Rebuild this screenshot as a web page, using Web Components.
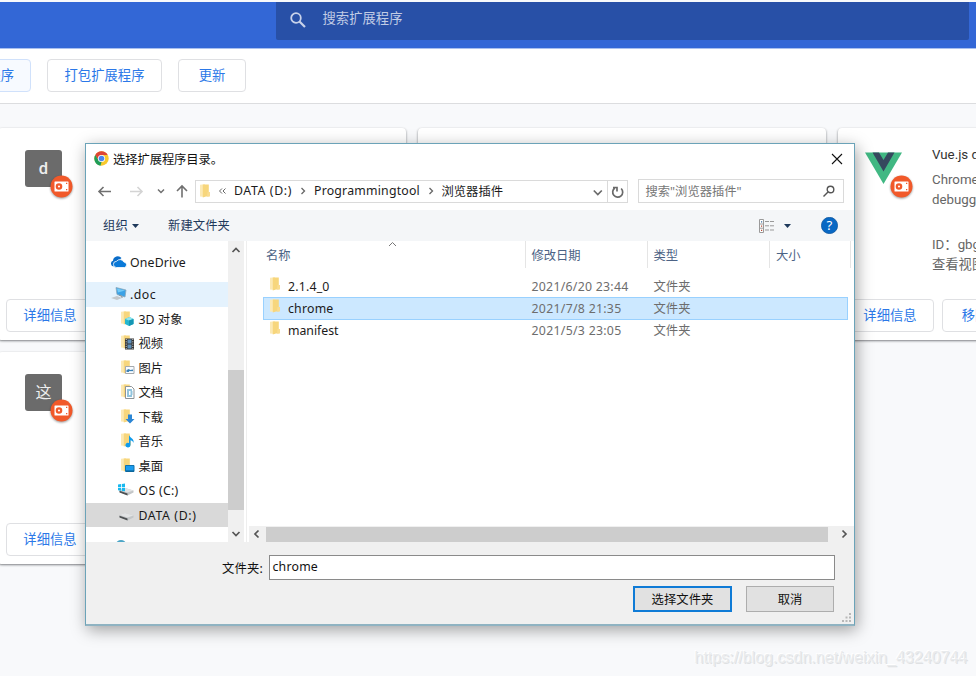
<!DOCTYPE html>
<html lang="zh-CN">
<head>
<meta charset="utf-8">
<title>扩展程序</title>
<style>
html,body{margin:0;padding:0}
body{width:976px;height:676px;overflow:hidden;position:relative;background:#f8f9fb;font-family:"Noto Sans","Noto Sans CJK SC",sans-serif;font-size:12.3px}
</style>
</head>
<body>
<ext-page></ext-page>
<folder-dialog></folder-dialog>
<script>
const make = (name, html, after) => customElements.define(name, class extends HTMLElement {
  connectedCallback() {
    if (this.shadowRoot) return;
    const root = this.attachShadow({mode: 'open'});
    root.innerHTML = typeof html === 'function' ? html(this) : html;
    if (after) after(this, root);
  }
});

make('ext-page', `
<style>
:host{display:block;width:976px;height:676px;overflow:hidden;font-family:Roboto,"Noto Sans CJK SC",sans-serif}
header{margin-top:2px;background:#3367d6;display:flex;border-bottom:1px solid #a9c0ef;box-sizing:border-box;height:47px}
.search{margin-left:275.500px;width:693px;height:38px;background:#2850a7;border-radius:0 0 2px 2px;display:flex;align-items:center;color:#c1cce5;font-size:13.3px;line-height:20px}
.search svg{margin:0 16px 2px 13px}
.search ui-label{padding-bottom:4px}
.tools{background:#fff;border-bottom:1px solid #dcdddf;display:flex;gap:16px;padding-top:10px;box-sizing:border-box;height:55px;margin-left:-60px}
.cards{display:grid;grid-template-columns:408px 408px 408px;grid-auto-rows:212px;gap:12px;margin:24px 0 0 -2px;width:1248px}
</style>
<header><div class="search"><svg width="18" height="18" viewBox="0 0 18 18" fill="none" stroke="#c8d2ea" stroke-width="1.8"><circle cx="7" cy="7" r="4.8"/><path d="M10.5 10.5L16 16" stroke-width="2.2"/></svg><ui-label w="80">搜索扩展程序</ui-label></div></header>
<div class="tools">
<page-button style="width:91px" tint><ui-label w="53.3">扩展程序</ui-label></page-button>
<page-button style="width:115px"><ui-label w="80">打包扩展程序</ui-label></page-button>
<page-button style="width:68px"><ui-label w="26.6">更新</ui-label></page-button>
</div>
<div class="cards">
<ext-card letter="d"></ext-card><ext-card></ext-card>
<ext-card vue><div slot="text"><div style="color:#333;height:24.5px"><ui-label>Vue.js devtools</ui-label></div><div style="height:20.500px">Chrome and</div><div style="height:44.5px">debugging</div><div style="height:20.5px">ID：gbgnko</div><div>查看视图</div></div></ext-card>
<ext-card letter="这"></ext-card>
</div>`);

make('page-button', `
<style>
:host{display:flex;box-sizing:border-box;height:33px;flex:none;align-items:center;justify-content:center;border:1px solid #dfe0e3;border-radius:4px;background:#fff;color:#2b78e8;font-size:13.3px;line-height:20px}
:host([tint]){background:#f7faff;border-color:#d0e1fb;justify-content:flex-end;padding-right:16px}
</style><slot></slot>`);

make('ext-card', el => `
<style>
:host{display:flex;flex-direction:column;background:#fff;border-radius:4px;box-shadow:0 1px 2px rgba(60,64,67,.5),0 1px 3px rgba(60,64,67,.2);overflow:hidden}
.top{height:171px;display:flex;box-sizing:border-box;padding:22px 0 0 27px;flex:none}
.pic{width:37px;height:37px;position:relative;flex:none}
.tile{width:37px;height:37px;border-radius:3px;background:#6b6b6b;color:#eee;display:flex;align-items:center;justify-content:center;font:500 16.5px/22px Roboto,"Noto Sans CJK SC",sans-serif}
.tile.cjk{font-weight:400;font-size:16px}
.badge{position:absolute;left:24.5px;top:25px;filter:drop-shadow(0 1px 1px rgba(0,0,0,.4))}
.text{margin:-5px 0 0 30px;font-size:13.3px;line-height:20px;color:#666;white-space:nowrap}
.acts{display:flex;gap:8px;padding-left:8px}
</style>
<div class="top"><div class="pic">
${el.hasAttribute('vue') ? '<svg width="37" height="37" viewBox="0 0 37 37"><path d="M0 2.500H37L18.500 34Z" fill="#41b883"/><path d="M7.500 2.500H14L18.500 10L23 2.500H29.500L18.500 21.500Z" fill="#35495e"/></svg>' : el.getAttribute('letter') ? `<div class="tile${el.getAttribute('letter') > 'z' ? ' cjk' : ''}">${el.getAttribute('letter')}</div>` : ''}
${el.hasAttribute('vue') || el.getAttribute('letter') ? '<svg class="badge" width="23" height="23" viewBox="0 0 23 23"><circle cx="11.500" cy="11.500" r="11" fill="#f1592a"/><rect x="4.500" y="6.500" width="14" height="10" rx=".5" fill="#fff"/><circle cx="9" cy="11.500" r="2.200" fill="#fff" stroke="#f1592a" stroke-width="2.200"/><path d="M16 7.700h1.300v1.300h-1.300zM16 14h1.300v1.300h-1.300z" fill="#f1592a"/></svg>' : ''}
</div><div class="text"><slot name="text"></slot></div></div>
<div class="acts"><page-button style="width:88px"><ui-label w="53.3">详细信息</ui-label></page-button><page-button style="width:66px"><ui-label w="26.6">移除</ui-label></page-button></div>`);

const FOLDER = '<path d="M0 .800L5 .200V13L0 12.500Z" fill="#fce9b4"/><path d="M2.800 .500H8.800V12.500H6L2.800 13.500Z" fill="#f7d67c"/><path d="M7.500 8H10V12.500H7Z" fill="#f9dc90"/>';
const DRIVE = '<path d="M1.500 8L7 6L15.500 8.500V10.500L9.500 13.500L1.500 10Z" fill="#c3c6c8"/><path d="M1.500 8L7 6L15.500 8.500L9.500 10.500Z" fill="#e2e3e4"/><path d="M1.500 8.800L9.500 11.500V13.500L1.500 10.500Z" fill="#4d5052"/>';
const ICONS = {
  folder: FOLDER,
  cloud: '<path d="M2.500 12.500a3 3 0 0 1-.5-5.800A4.800 4.800 0 0 1 10.500 4L6 8Z" fill="#0a6cc8"/><path d="M5.500 13.500a3 3 0 0 1 0-6.200A4.300 4.300 0 0 1 12.800 8A2.800 2.800 0 0 1 13.500 13.500Z" fill="#0a79d8" stroke="#fff" stroke-width=".8"/>',
  pc: '<path d="M5 1.500L15 4L14 11L6 8.500Z" fill="#3ba2e6" stroke="#8ba8bb" stroke-width=".8"/><path d="M6 2.500L14 4.500L7 6.500Z" fill="#72caf7"/><path d="M0 12L6 10L11 12L6 14Z" fill="#c3c8cc"/><path d="M8 9L11 10.500V12" stroke="#8a9298" fill="none"/>',
  cube: FOLDER + '<path d="M4 8L8.500 6L12.500 8V13L8 15L4 13Z" fill="#25b7cf"/><path d="M4 8L8.500 6L12.500 8L8 9.500Z" fill="#90e6ed"/><path d="M8 9.500L12.500 8V13L8 15Z" fill="#1596b4"/>',
  video: FOLDER + '<path d="M4 3.500H13V14.500H4Z" fill="#343434"/><path d="M6.500 4.500H10.500V8.500H6.500ZM6.500 9.500H10.500V13.500H6.500Z" fill="#5e8fba"/><path d="M5.200 4v10M11.800 4v10" stroke="#ddd" stroke-width="1" stroke-dasharray="1 1.300"/>',
  image: FOLDER + '<path d="M4.500 6.500H13V13.500H4.500Z" fill="#f8fbff" stroke="#a5a9ad"/><path d="M5.500 10L8 9L9 10L12 9.500V12H5.500Z" fill="#3b82b7"/><path d="M8 11.500h4" stroke="#dcecf6"/>',
  doc: FOLDER + '<path d="M4.500 2.500H10.500L13 5V14.500H4.500Z" fill="#fff" stroke="#8d9397"/><path d="M6 6h5M6 8h2M9.500 8h2M6 10h2M9.500 10h2M6 12h5" stroke="#2588ba"/>',
  down: FOLDER + '<path d="M7 5.500H11V10H13.500L9 14.500L4.500 10H7Z" fill="#2c86d4"/>',
  music: FOLDER + '<path d="M8 2C9 5 13.500 5.500 12.500 10C12 8 10.500 7.500 9.500 7.500V12A2.500 2.300 0 1 1 8 10Z" fill="#109bec"/>',
  desk: FOLDER + '<path d="M4.500 7.500H13V13.500H4.500Z" fill="#1a9cf0" stroke="#1172ad"/><path d="M5 13H13" stroke="#075887"/>',
  win: DRIVE + '<path d="M0 2.500L3 2V5H0ZM3.800 1.900L7 1.500V5H3.800ZM0 5.800H3V8.800L0 8.300ZM3.800 5.800H7V9.300L3.800 9Z" fill="#18b8ef"/>',
  drive: DRIVE
};
make('ui-icon', el => `<style>:host{display:block;width:16px;height:16px;flex:none}svg{display:block}</style><svg width="16" height="16" viewBox="0 0 16 16">${ICONS[el.getAttribute('name')]}</svg>`);

make('tree-item', el => `
<style>
:host{display:flex;align-items:center;height:24.500px;flex:none;color:#1a1a1a;box-sizing:border-box;padding-left:34.500px}
:host([root]){padding-left:25px}:host([disk]){padding-left:32px}
:host([hot]){background:#e4f2fd}:host([cur]){background:#d9d9d9}
ui-icon{margin-right:2px}:host([root]) ui-icon{margin-right:3px}:host([disk]) ui-icon{margin-right:4.500px}
::slotted(ui-label){padding-top:2px}
</style><ui-icon name="${el.getAttribute('icon')}"></ui-icon><slot></slot>`);

make('file-row', el => `
<style>
:host{display:grid;grid-template-columns:261.500px 122px 1fr;align-items:center;height:22px;box-sizing:border-box;width:585px;border:1px solid transparent;color:#6d6d6d;line-height:18px}
:host([sel]){background:#cce8ff;border-color:#99d1ff;height:23px;margin:-.5px 0}
.n{display:flex;align-items:center;color:#1a1a1a;padding-left:6px}ui-icon{margin:-2px 2px 0 0}
.d{padding-left:6px}.t{padding-left:6px}
.d,.t{padding-top:1px}
::slotted(ui-label){padding-top:1px}
</style><div class="n"><ui-icon name="folder"></ui-icon><slot></slot></div><div class="d"><ui-label w="${el.getAttribute('dw')}">${el.getAttribute('date')}</ui-label></div><div class="t"><ui-label w="37">文件夹</ui-label></div>`);

make('win-button', `<style>:host{display:flex;box-sizing:border-box;height:26px;align-items:center;justify-content:center;background:#e1e1e1;border:1px solid #adadad;color:#111}:host([primary]){border:2px solid #0f7bd6}::slotted(ui-label){padding-top:1px}</style><slot></slot>`);

make('folder-dialog', `
<style>
:host{position:absolute;left:85px;top:143px;width:770px;height:483px;box-sizing:border-box;border:1px solid #6ba3b8;border-bottom:2px solid #8fb3c2;background:#fff;box-shadow:2px 4px 15px rgba(0,0,0,.36);display:flex;flex-direction:column;line-height:18px;white-space:nowrap}
.title{height:30px;display:flex;align-items:center;padding:0 11.500px 0 7.500px;color:#111;flex:none}
.title ui-label{margin-left:4.500px;flex:1;padding-top:2px}
.title svg:first-child{margin-bottom:1px}
.nav{height:36px;display:flex;align-items:center;flex:none;box-sizing:border-box;padding:0 9px 2px 10px}
.addr{width:433px;height:23px;box-sizing:border-box;border:1px solid #dadada;display:flex;align-items:center;color:#1c1c1c}
.find{margin-left:9.500px;width:206.500px;height:24px;box-sizing:border-box;border:1px solid #dadada;display:flex;align-items:center;color:#777;padding:0 7px}
.find ui-label{flex:1;padding-top:2px}
.bar{height:31px;background:#f4f6f8;display:flex;align-items:center;color:#1e395b;flex:none;padding:0 16px 0 17px}
.body{height:301px;display:flex;flex:none}
.tree{width:142px;display:flex;flex-direction:column;padding-top:8px;box-sizing:border-box;overflow:hidden}
.vs{width:16px;background:#f0f0f0;display:flex;flex-direction:column;align-items:center}
.vs .thumb{width:16px;height:140px;background:#cdcdcd;margin-top:111px}
.gut{border-right:1px solid #eee;box-sizing:border-box;width:3px}
.main{flex:1;display:flex;flex-direction:column;padding-left:2px}
.head{display:grid;grid-template-columns:276.500px 122px 122.500px 81px;height:27px;color:#4c6385;align-items:stretch;position:relative}
.head div{border-right:1px solid #e5e5e5;display:flex;align-items:center;padding:2px 0 0 6px}
.head div:first-child{padding-left:17px}
.head svg{position:absolute;left:139px;top:0}
.files{flex:1;padding:7px 0 0 14px}
.hs{height:16px;background:#f0f0f0;display:flex;align-items:center}
.hs i{display:block;width:562px;height:15px;background:#cdcdcd}
.foot{flex:1;background:#f0f0f0;display:flex;flex-direction:column;position:relative;color:#111}
.row{display:flex;align-items:center;padding:13px 0 0 136px}
.row>ui-label{padding-top:2px}
.inp{width:566px;height:25px;box-sizing:border-box;border:1px solid #8a8a8a;background:#fff;margin-left:6px;padding:0 0 2px 2.500px;display:flex;align-items:center}
.btns{display:flex;justify-content:flex-end;gap:14px;padding:6px 20px 0 0}
.grip{position:absolute;right:2px;bottom:1px}
svg{display:block;flex:none}
</style>
<div class="title"><svg width="15" height="15" viewBox="0 0 15 15"><circle cx="7.500" cy="7.500" r="7.200" fill="#f7c92d"/><path d="M1.300 3.900A7.200 7.200 0 0 1 13.700 3.900H7.500L4.400 9.300Z" fill="#dd4536"/><path d="M1.300 3.900L4.400 9.300L7.500 11.100L6.500 14.700A7.200 7.200 0 0 1 1.300 3.900Z" fill="#1f9d58"/><circle cx="7.500" cy="7.500" r="3.600" fill="#fff"/><circle cx="7.500" cy="7.500" r="2.800" fill="#4a86ee"/></svg><ui-label w="110">选择扩展程序目录。</ui-label><svg width="12" height="12" viewBox="0 0 12 12"><path d="M1 1L11 11M11 1L1 11" stroke="#111" stroke-width="1.100"/></svg></div>
<div class="nav">
<svg width="99" height="18" viewBox="0 0 99 18" fill="none" stroke="#707070" stroke-width="1.600"><path d="M3 9.500H15M7.500 5L3 9.500L7.500 14"/><path d="M34 9.500H46M41.500 5L46 9.500L41.500 14" stroke="#d4d4d4"/><path d="M62 7.500L65 10.500L68 7.500" stroke-width="1.500"/><path d="M86 15.500V4M81 9L86 4L91 9"/></svg>
<div class="addr"><ui-icon name="folder" style="margin:1px 0 0 4px"></ui-icon>
<svg width="9" height="10" viewBox="0 0 9 10" fill="none" stroke="#666" style="margin:0 7px 0 2px"><path d="M4 2.500L1.500 5L4 7.500M7.500 2.500L5 5L7.500 7.500"/></svg>
<ui-label w="58">DATA (D:)</ui-label>
<svg width="22" height="10" viewBox="0 0 22 10" fill="none" stroke="#666" stroke-width="1.300"><path d="M9.500 2L12.500 5L9.500 8"/></svg>
<ui-label w="106">Programmingtool</ui-label>
<svg width="21.500" height="10" viewBox="0 0 21.500 10" fill="none" stroke="#666" stroke-width="1.300"><path d="M9.500 2L12.500 5L9.500 8"/></svg>
<ui-label w="61.500" style="padding-top:1px">浏览器插件</ui-label><span style="flex:1"></span>
<svg width="34" height="21" viewBox="0 0 34 21" fill="none" stroke="#6a6a6a" stroke-width="1.500"><path d="M.8 9.500L4.800 13.500L8.800 9.500" stroke-width="1.700"/><path d="M14.500 0V21" stroke="#dadada" stroke-width="1"/><path d="M21.800 7A5 5 0 1 0 28.200 7.500M20 6.500h4v4" stroke-width="1.700"/></svg></div>
<div class="find"><ui-label>搜索"浏览器插件"</ui-label><svg width="14" height="14" viewBox="0 0 14 14" fill="none" stroke="#555" stroke-width="1.400"><circle cx="8.500" cy="5.500" r="3.300"/><path d="M6 8L1.500 12.500"/></svg></div>
</div>
<div class="bar"><ui-label w="25">组织</ui-label><svg width="7" height="4" viewBox="0 0 7 4" style="margin:0 29px 0 4px"><path d="M0 0H7L3.500 4Z" fill="#1e395b"/></svg><ui-label w="62" style="padding-top:1px">新建文件夹</ui-label><span style="flex:1"></span>
<svg width="16" height="14" viewBox="0 0 16 14"><path d="M.5.5H4.500V13.500H.5ZM.5 5H4.500M.5 9.200H4.500" fill="#fff" stroke="#9a9a9a"/><path d="M2 2.300h1.200v1.200H2z" fill="#34679a"/><path d="M2 6.500h1.200v1.200H2zM2 10.700h1.200v1.200H2z" fill="#b34833"/><path d="M6 2.500h4M11 2.500h4M6 6.800h4M11 6.800h4M6 11h4M11 11h4" stroke="#999"/></svg>
<svg width="7" height="4" viewBox="0 0 7 4" style="margin:0 30px 0 9.500px"><path d="M0 0H7L3.500 4Z" fill="#1e395b"/></svg>
<svg width="17" height="17" viewBox="0 0 16 16"><circle cx="8" cy="8" r="7.700" fill="#0868c4" stroke="#0a4f96" stroke-width=".6"/><text x="8" y="12.500" text-anchor="middle" font-size="12.500" fill="#fff">?</text></svg></div>
<div class="body">
<div class="tree">
<tree-item root icon="cloud" style="height:25px"><ui-label w="56">OneDrive</ui-label></tree-item>
<tree-item root hot icon="pc" style="margin-top:8px"><ui-label w="26">.doc</ui-label></tree-item>
<tree-item icon="cube"><ui-label w="44">3D 对象</ui-label></tree-item>
<tree-item icon="video"><ui-label w="24.600">视频</ui-label></tree-item>
<tree-item icon="image"><ui-label w="24.600">图片</ui-label></tree-item>
<tree-item icon="doc"><ui-label w="24.600">文档</ui-label></tree-item>
<tree-item icon="down"><ui-label w="24.600">下载</ui-label></tree-item>
<tree-item icon="music"><ui-label w="24.600">音乐</ui-label></tree-item>
<tree-item icon="desk"><ui-label w="24.600">桌面</ui-label></tree-item>
<tree-item disk icon="win"><ui-label w="40">OS (C:)</ui-label></tree-item>
<tree-item disk cur icon="drive"><ui-label w="58">DATA (D:)</ui-label></tree-item>
<svg width="12" height="8" viewBox="0 0 12 8" style="margin:12px 0 0 29px"><ellipse cx="6" cy="5" rx="5" ry="4" fill="#4ca5c6"/></svg>
</div>
<div class="vs"><svg width="10" height="8" viewBox="0 0 10 8" fill="none" stroke="#555" stroke-width="1.700" style="margin-top:5px;margin-bottom:5px"><path d="M1.500 6L5 2.500L8.500 6"/></svg><div class="thumb"></div><svg width="10" height="8" viewBox="0 0 10 8" fill="none" stroke="#555" stroke-width="1.700" style="margin-top:20px"><path d="M1.500 2L5 5.500L8.500 2"/></svg></div>
<div class="gut"></div>
<div class="main">
<div class="head"><div><ui-label w="24.600">名称</ui-label></div><div><ui-label w="49">修改日期</ui-label></div><div><ui-label w="24.600">类型</ui-label></div><div><ui-label w="24.600">大小</ui-label></div><svg width="9" height="6" viewBox="0 0 9 6" fill="none" stroke="#777"><path d="M1 5L4.500 1.500L8 5"/></svg></div>
<div class="files"><file-row date="2021/6/20 23:44" dw="97"><ui-label w="41.500">2.1.4_0</ui-label></file-row><file-row sel date="2021/7/8 21:35" dw="90"><ui-label w="45.500">chrome</ui-label></file-row><file-row date="2021/5/3 23:05" dw="90"><ui-label w="50.500">manifest</ui-label></file-row></div>
<div class="hs"><svg width="17" height="10" viewBox="0 0 17 10" fill="none" stroke="#555" stroke-width="1.700"><path d="M9.500 1.500L6 5L9.500 8.500"/></svg><i></i><svg width="24" height="10" viewBox="0 0 24 10" fill="none" stroke="#555" stroke-width="1.700"><path d="M14.500 1.500L18 5L14.500 8.500"/></svg></div>
</div></div>
<div class="foot"><div class="row"><ui-label w="41">文件夹:</ui-label><div class="inp"><ui-label w="45.500">chrome</ui-label></div></div>
<div class="btns"><win-button primary style="width:99px"><ui-label w="62">选择文件夹</ui-label></win-button><win-button style="width:88px"><ui-label w="24.600">取消</ui-label></win-button></div>
<svg class="grip" width="10" height="10" viewBox="0 0 10 10" fill="#b8b8b8"><path d="M7 0h2v2H7zM7 3.500h2v2H7zM3.500 3.500h2v2h-2zM7 7h2v2H7zM3.500 7h2v2h-2zM0 7h2v2H0z"/></svg></div>`);

make('page-watermark', `<style>:host{position:absolute;right:8.500px;top:647px;font:16px/22px "Liberation Sans",sans-serif;color:#e9ebed;text-shadow:-1px -1px 0 #fff,1px 1px 0 #dfe1e3}</style><ui-label w="273">https://blog.csdn.net/weixin_43240744</ui-label>`);
document.body.append(document.createElement('page-watermark'));

// Spreads the glyphs so that the label takes the width named in "w".
make('ui-label', '<style>:host{display:block;white-space:nowrap}span{display:inline-block;vertical-align:top}</style><span><slot></slot></span>', (el, root) => {
  const want = parseFloat(el.getAttribute('w'));
  if (!want) return;
  const span = root.firstElementChild.nextElementSibling;
  const have = span.getBoundingClientRect().width;
  if (have) span.style.letterSpacing = ((want - have) / el.textContent.length).toFixed(3) + 'px';
});
</script>
</body>
</html>
